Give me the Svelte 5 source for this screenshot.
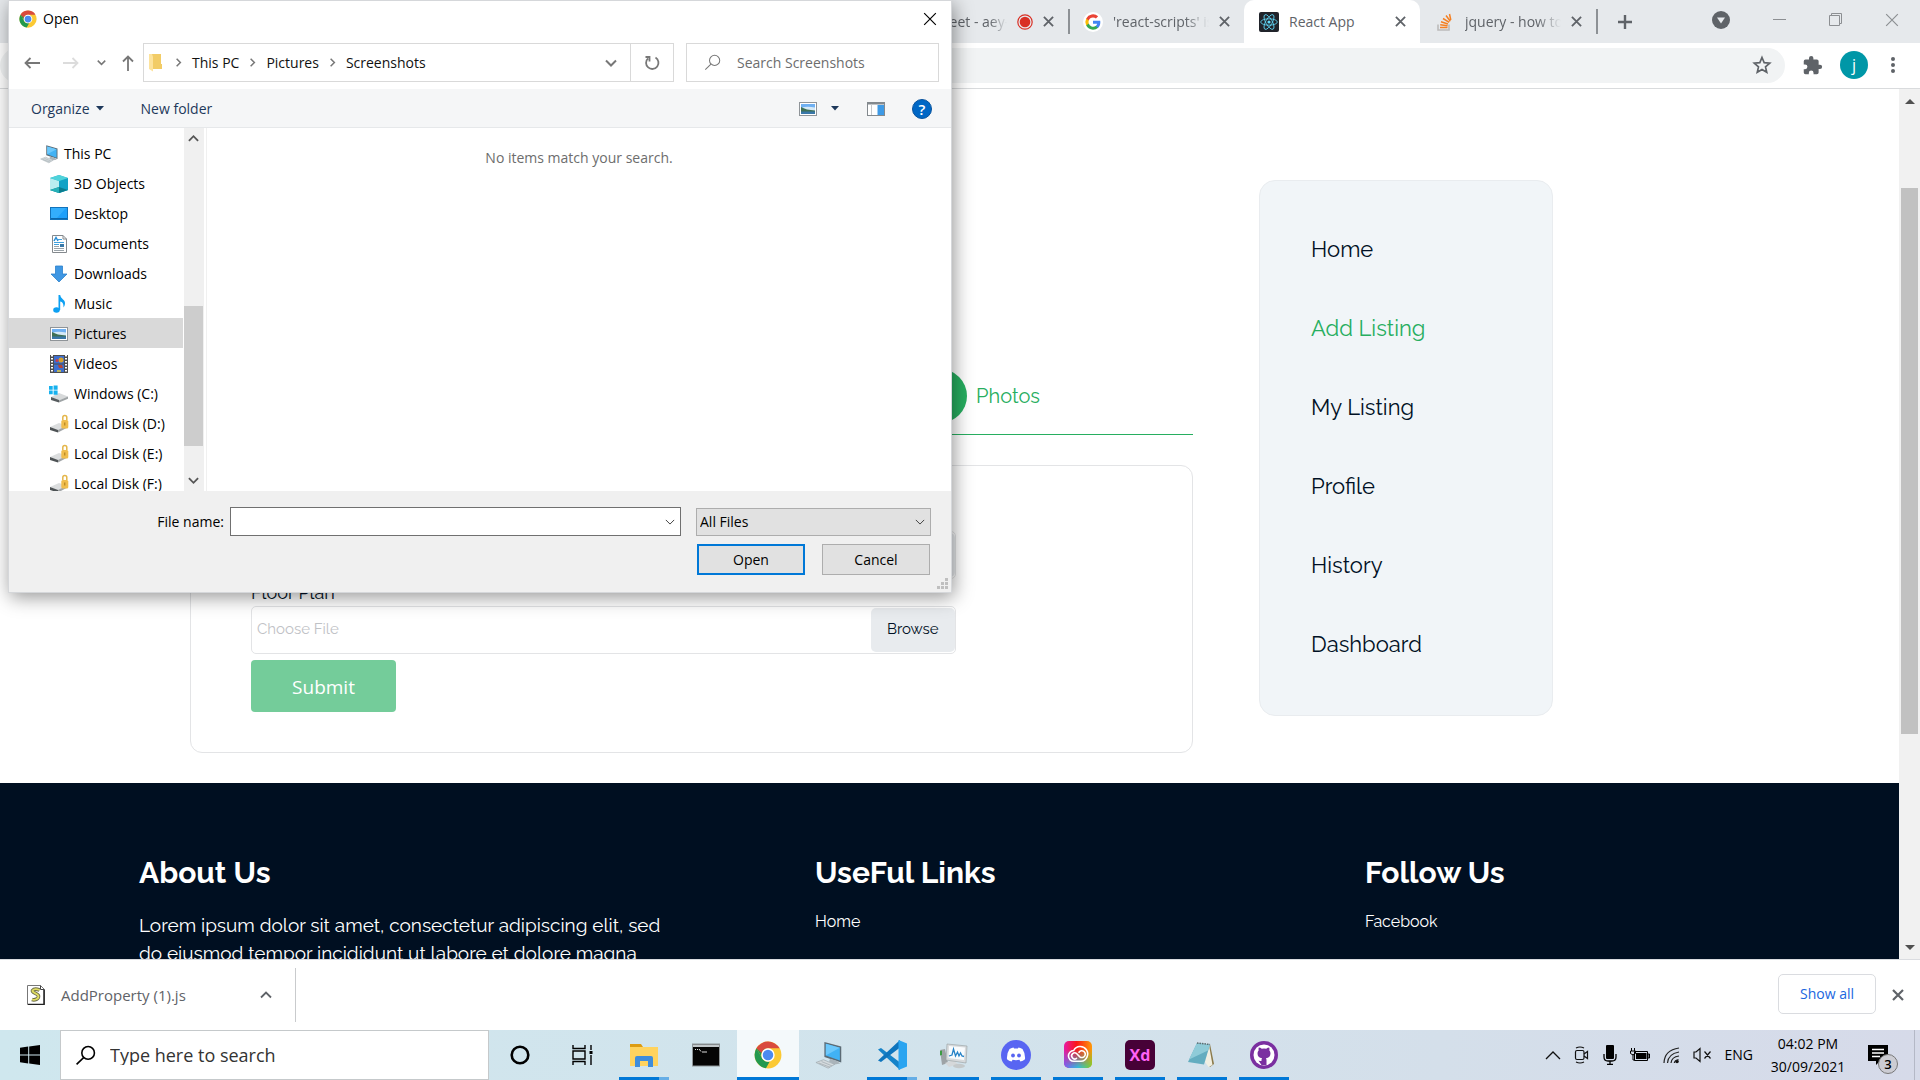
<script>
  const tree = [
    { icon: 'objects', label: '3D Objects' },
    { icon: 'desktop', label: 'Desktop' },
    { icon: 'documents', label: 'Documents' },
    { icon: 'downloads', label: 'Downloads' },
    { icon: 'music', label: 'Music' },
    { icon: 'picture', label: 'Pictures', selected: true },
    { icon: 'videos', label: 'Videos' },
    { icon: 'windrive', label: 'Windows (C:)' },
    { icon: 'drive', label: 'Local Disk (D:)' },
    { icon: 'drive', label: 'Local Disk (E:)' },
    { icon: 'drive', label: 'Local Disk (F:)' },
  ];
  const menu = ['Home', 'Add Listing', 'My Listing', 'Profile', 'History', 'Dashboard'];
  const crumbs = ['This PC', 'Pictures', 'Screenshots'];
  const apps = [
    { icon: 'explorer', label: 'File Explorer', state: 'multi' },
    { icon: 'cmd', label: 'Command Prompt', state: '' },
    { icon: 'chrome', label: 'Google Chrome', state: 'active' },
    { icon: 'pc', label: 'This PC', state: '' },
    { icon: 'vscode', label: 'Visual Studio Code', state: 'multi' },
    { icon: 'monitor', label: 'Resource Monitor', state: 'open' },
    { icon: 'discord', label: 'Discord', state: 'open' },
    { icon: 'cc', label: 'Creative Cloud', state: 'open' },
    { icon: 'xd', label: 'Adobe XD', state: 'open' },
    { icon: 'notepad', label: 'Notepad', state: 'open' },
    { icon: 'github', label: 'GitHub Desktop', state: 'open' },
  ];
  let fileName = $state('');
</script>

{#snippet cross(size, width = 2)}
  <svg width={size} height={size} viewBox="0 0 12 12" fill="none" stroke="currentColor" stroke-width={width}><path d="M1 1l10 10M11 1L1 11" /></svg>
{/snippet}

{#snippet chevron(dir, size, width = 2)}
  <svg class="chev {dir}" width={size} height={size} viewBox="0 0 12 12" fill="none" stroke="currentColor" stroke-width={width}><path d="M1 3.500l5 5 5-5" /></svg>
{/snippet}

{#snippet chrome(size)}
  <svg width={size} height={size} viewBox="0 0 48 48">
    <circle cx="24" cy="24" r="23" fill="#fbc934" />
    <path d="M4.100 12.500L14 29.700A11.500 11.500 0 0 0 27 35.100L20.500 46.700A23 23 0 0 1 4.100 12.500z" fill="#23994f" />
    <path d="M4.100 12.500L14 29.700A11.500 11.500 0 0 1 24 12.500h-8z" fill="#23994f" />
    <path d="M4.100 12.500A23 23 0 0 1 43.900 12.500H24a11.500 11.500 0 0 0-11 8z" fill="#d94b3d" />
    <circle cx="24" cy="24" r="11.500" fill="#fff" />
    <circle cx="24" cy="24" r="9" fill="#4b8af0" />
  </svg>
{/snippet}

{#snippet pc(size)}
  <svg width={size} height={size} viewBox="0 0 32 32">
    <path d="M10 2l18 5v17L10 18z" fill="#5c6b75" />
    <path d="M11.500 4l15 4.300v13.500L11.500 16.500z" fill="#41b2f4" />
    <path d="M11.500 4l15 4.300-15 8.200z" fill="#6cc8fb" />
    <path d="M16 20l7 2 4 3-6 1-6-3z" fill="#aab4ba" />
    <path d="M1 24l8-3 12 5-7 4z" fill="#d4dadd" stroke="#9aa5ab" stroke-width=".7" />
    <path d="M4 24.500l12 4.500M7 23l11 4.500" stroke="#9aa5ab" stroke-width=".7" />
  </svg>
{/snippet}

{#snippet picture(size)}
  <svg width={size} height={size} viewBox="0 0 20 20">
    <rect x="1.500" y="3.500" width="17" height="13" fill="#fff" stroke="#8f9498" />
    <rect x="3" y="5" width="14" height="10" fill="#6fb0f2" />
    <path d="M3 9q5-2 14-.5V12H3z" fill="#d5e9f6" />
    <path d="M3 8q5 3 14 3.500V13H3z" fill="#3f7055" />
    <path d="M3 12.500h14V15H3z" fill="#3977a8" />
  </svg>
{/snippet}

{#snippet lens(size, width)}
  <svg width={size} height={size} viewBox="0 0 20 20" fill="none" stroke="currentColor" stroke-width={width}><circle cx="12.500" cy="7.500" r="6" /><path d="M8.200 12L1.500 18.500" /></svg>
{/snippet}

{#snippet small(name)}
  {#if name === 'picture'}
    {@render picture(20)}
  {:else}
    <svg width="20" height="20" viewBox="0 0 20 20">
      {#if name === 'objects'}
        <path d="M10 1l9 3v12l-9 3-9-3V4z" fill="#27b5c9" />
        <path d="M1 4l9 3v12l-9-3z" fill="#b9edf0" /><path d="M10 7l9-3v12l-9 3z" fill="#12a3c6" />
        <path d="M10 1l9 3-9 3-9-3z" fill="#4fd2da" /><path d="M10 13l9 3-9 3-9-3z" fill="#0b7d8f" /><path d="M1 16l9-3v6z" fill="#26b1b8" />
      {:else if name === 'desktop'}
        <rect x="1.500" y="3.500" width="17" height="12" fill="#1ea0fa" stroke="#1273bb" /><path d="M2 4h15L7 15H2z" fill="#33aefc" /><path d="M2 14.500h16" stroke="#0c67ab" />
      {:else if name === 'documents'}
        <path d="M3.500 1.500H14L17.500 5v13.500h-14z" fill="#fff" stroke="#84898d" /><path d="M14 1.500V5h3.500" fill="none" stroke="#84898d" />
        <path d="M5 7l2-3.500L9 7" fill="none" stroke="#278cd5" stroke-width="1.500" /><path d="M9 5.500h4M5 8.500h10M5 10.500h5" stroke="#41a1dd" /><path d="M11 10h4v3h-4z" fill="#3979a8" /><path d="M5 12.500h5M5 14.500h10M5 16.500h10" stroke="#9aa3a9" />
      {:else if name === 'downloads'}
        <path d="M6.500 2h7v8H18l-8 8-8-8h4.500z" fill="#3f97e3" stroke="#2c80cc" stroke-width=".8" />
      {:else if name === 'music'}
        <ellipse cx="7.500" cy="16" rx="3.300" ry="2.800" fill="#0da0f2" /><path d="M9.500 16V1h1.700c.5 4 4.800 4.500 4.800 8 0 2-.6 3-1.500 4.500.2-4-1-5.500-3.300-6v8.500z" fill="#0da0f2" />
      {:else if name === 'videos'}
        <path d="M1 1h18v18H1z" fill="#4d4d4d" /><path d="M5 2h10v7.500H5zM5 10.500h10V18H5z" fill="#3d6fd0" />
        <path d="M3 1v18M17 1v18" stroke="#fff" stroke-width="2" stroke-dasharray="1.600 1.400" /><circle cx="12" cy="6" r="2.500" fill="#d5a02a" /><circle cx="8" cy="6.500" r="1.500" fill="#c83e4a" /><path d="M9 11h4l1 3h-4z" fill="#b34532" /><path d="M8 17h4" stroke="#e3cd3c" stroke-width="1.500" />
      {:else if name === 'windrive'}
        <path d="M2 13l8-4 9 3.500-9 4.500z" fill="#d7d9da" /><path d="M2 13l8 3v2.500L2 16z" fill="#565b5e" /><path d="M10 16.500l9-4v2.300L10 18.500z" fill="#9ea3a5" />
        <path d="M0 2h3.700v3.700H0zM4.600 1.500h4v4.200h-4zM0 6.600h3.700v3.700H0zM4.600 6.600h4v4.200h-4z" fill="#17b1ee" />
      {:else}
        <path d="M1 13l9-4 8 2.500-9 5z" fill="#dcdedf" /><path d="M1 13l8 3v2.500L1 16z" fill="#4d5254" /><path d="M9 16l9-4.500v2.300l-9 4.700z" fill="#a2a6a8" />
        <path d="M13.800 6V3.500a2 2 0 0 1 4 0V6" fill="none" stroke="#e4b64a" stroke-width="1.500" /><rect x="12.300" y="6" width="7" height="8.500" rx="1.500" fill="#f0bd4d" /><path d="M15.800 8.500v3" stroke="#a97818" />
      {/if}
    </svg>
  {/if}
{/snippet}

{#snippet app(name)}
  {#if name === 'chrome'}
    {@render chrome(28)}
  {:else if name === 'pc'}
    {@render pc(30)}
  {:else}
    <svg width="30" height="30" viewBox="0 0 30 30">
      {#if name === 'explorer'}
        <path d="M1 4h11l2 3h15v19H1z" fill="#dd9c12" /><path d="M1 7h28v19H1z" fill="#ffd35e" /><path d="M6 27V18q0-2 2-2h14q2 0 2 2v9h-5v-6h-8v6z" fill="#3f8ddb" />
      {:else if name === 'cmd'}
        <rect x="1.500" y="4" width="27" height="22" fill="#050505" stroke="#8e9598" /><path d="M2 4.500h26V7H2z" fill="#c2c8cb" /><path d="M4 9.500h1M6 9.500h1M8 9l2 2.500M11 12h5" stroke="#ddd" />
      {:else if name === 'vscode'}
        <path d="M1 9.500L4 8l19 14.500V30z" fill="#1583c9" /><path d="M1 20.500L4 22 23 7.500V0z" fill="#0d74bd" /><path d="M21.500 0L30 3.500v23L21.500 30z" fill="#2aa4f0" />
      {:else if name === 'monitor'}
        <path d="M1 10l5-1 3 14-6 2z" fill="#9da3a6" /><path d="M1 11l2-.5V15l-2 .4z" fill="#3c9c44" /><path d="M6 23l8-3 5 4-9 3z" fill="#d5d8da" />
        <path d="M8 4l20 2-1 17-20-3z" fill="#d7dadc" stroke="#969da0" stroke-width=".6" /><path d="M10 6l16 1.500-1 12.500-15.500-2z" fill="#f8fbfd" /><path d="M10 16l3-1 1.500-6 2 7 2-4 1.500 4 1.500-3 1.500 3 2 .5" fill="none" stroke="#2582c7" stroke-width="1.300" /><ellipse cx="20" cy="26" rx="6" ry="2.200" fill="#c4c9cb" />
      {:else if name === 'discord'}
        <circle cx="15" cy="15" r="15" fill="#5865f2" /><path d="M8.500 9q2.500-1.500 4-1.600l.6 1.200h3.800l.6-1.200q1.500.1 4 1.600 3 4.500 2.500 10.300-2 1.700-4.600 2.200l-1-1.700q-3.400.8-6.800 0l-1 1.700Q8 21 6 19.300 5.500 13.500 8.500 9z" fill="#fff" /><circle cx="12" cy="15.500" r="1.900" fill="#5865f2" /><circle cx="18" cy="15.500" r="1.900" fill="#5865f2" />
      {:else if name === 'cc'}
        <defs>
          <linearGradient id="ccTop" x1="0" x2="1"><stop offset="0" stop-color="#e81aa5" /><stop offset=".45" stop-color="#fb1718" /><stop offset="1" stop-color="#ff9a09" /></linearGradient>
          <linearGradient id="ccBottom" x1="0" x2="1"><stop offset="0" stop-color="#7a5df2" /><stop offset=".5" stop-color="#36b8d9" /><stop offset="1" stop-color="#7ad02c" /></linearGradient>
          <linearGradient id="ccFade" x1="0" x2="0" y1="0" y2="1"><stop offset=".3" stop-color="#fff" stop-opacity="0" /><stop offset=".9" stop-color="#fff" /></linearGradient>
          <mask id="ccMask"><rect width="30" height="30" fill="url(#ccFade)" /></mask>
        </defs>
        <rect x="1" y="1" width="28" height="27" rx="5" fill="url(#ccTop)" /><rect x="1" y="1" width="28" height="27" rx="5" fill="url(#ccBottom)" mask="url(#ccMask)" />
        <path d="M11 21.300a5.400 5.400 0 0 1-.3-10.800A7.400 7.400 0 1 1 18 21.300z" fill="none" stroke="#fff" stroke-width="1.600" />
        <path d="M13.500 18.300a3 3 0 1 1 .3-4.500l3 3a3.400 3.400 0 1 0-.8-4.500" fill="none" stroke="#fff" stroke-width="1.600" stroke-linecap="round" />
      {:else if name === 'xd'}
        <rect width="30" height="30" rx="5" fill="#470137" /><text class="xd" x="15" y="21" text-anchor="middle" fill="#ff61f6">Xd</text>
      {:else if name === 'notepad'}
        <path d="M23 4l4 20-4 3-4-5z" fill="#8b7a4a" /><path d="M22 5l3.500 20-4 2L18 22z" fill="#f1efe2" /><path d="M10 3l13 1.500-6 20L1 22z" fill="#64adc0" /><path d="M10 3l13 1.500-2 6-19 9z" fill="#8fcbd8" /><path d="M10 3l13 1.500" stroke="#5d6c70" stroke-width="1.500" stroke-dasharray="1.500 1" />
      {:else if name === 'github'}
        <circle cx="15" cy="15" r="14" fill="#7a2fa0" /><circle cx="15" cy="15" r="10.500" fill="#fff" />
        <path d="M12.500 25v-4q-3 .6-4-1.800M17.500 25v-5q0-1-.6-1.700 4.600-.6 4.600-5 0-1.700-1.200-3 .5-1.400-.1-2.800-1.500 0-3 1.200-2.200-.6-4.400 0-1.500-1.200-3-1.200-.6 1.400-.1 2.800-1.200 1.300-1.200 3 0 4.400 4.600 5-.6.700-.6 1.700v5z" fill="#7a2fa0" />
      {/if}
    </svg>
  {/if}
{/snippet}

<div class="screen">
  <header class="tabs">
    <div class="tab">
      <span class="favicon"></span>
      <span class="title fade">Meet - aey-</span>
      <svg width="16" height="16" viewBox="0 0 16 16"><circle cx="8" cy="8" r="7.200" fill="none" stroke="#d93025" stroke-width="1.200" /><circle cx="8" cy="8" r="5.300" fill="#d93025" /></svg>
      <button class="plain" aria-label="Close tab">{@render cross(11)}</button>
    </div>
    <div class="tab divided">
      <svg class="favicon round" width="20" height="20" viewBox="-3 -3 30 30"><path d="M23 12.300c0-.8-.1-1.600-.2-2.300H12v4.500h6.200a5.300 5.300 0 0 1-2.300 3.500v2.900h3.700c2.200-2 3.400-5 3.400-8.600z" fill="#4285f4" /><path d="M12 23.500c3.100 0 5.700-1 7.600-2.800L15.900 18a6.900 6.900 0 0 1-10.300-3.700H1.800v3A11.500 11.500 0 0 0 12 23.500z" fill="#34a853" /><path d="M5.600 14.200a6.900 6.900 0 0 1 0-4.400v-3H1.800a11.500 11.500 0 0 0 0 10.400z" fill="#fbbc05" /><path d="M12 5.100c1.700 0 3.200.6 4.400 1.700l3.300-3.300A11.500 11.500 0 0 0 1.800 6.800l3.800 3A6.900 6.900 0 0 1 12 5.100z" fill="#ea4335" /></svg>
      <span class="title fade">'react-scripts' is</span>
      <button class="plain" aria-label="Close tab">{@render cross(11)}</button>
    </div>
    <div class="tab current">
      <svg class="favicon" width="20" height="20" viewBox="0 0 20 20"><rect width="20" height="20" rx="2" fill="#20232a" /><g fill="none" stroke="#61dafb" stroke-width=".8"><ellipse cx="10" cy="10" rx="8.300" ry="3.200" /><ellipse cx="10" cy="10" rx="8.300" ry="3.200" transform="rotate(60 10 10)" /><ellipse cx="10" cy="10" rx="8.300" ry="3.200" transform="rotate(120 10 10)" /></g><circle cx="10" cy="10" r="1.600" fill="#61dafb" /></svg>
      <span class="title">React App</span>
      <button class="plain" aria-label="Close tab">{@render cross(11)}</button>
    </div>
    <div class="tab">
      <svg class="favicon" width="20" height="20" viewBox="0 0 20 20" fill="none"><path d="M3 12.500v5.500h11v-5.500" stroke="#bcbbbb" stroke-width="1.600" /><path d="M5 15.500h7.500M5.200 12.800l7.400.9M6 9.800l7 2.200M8 6.500l6.200 3.800M11 3.500l4.300 5.800M14.500 2l1.300 6" stroke="#f48024" stroke-width="1.500" /></svg>
      <span class="title fade">jquery - how to</span>
      <button class="plain" aria-label="Close tab">{@render cross(11)}</button>
    </div>
    <button class="plain new-tab" aria-label="New tab"><svg width="16" height="16" viewBox="0 0 16 16" stroke="#5f6368" stroke-width="2.400"><path d="M8 1v14M1 8h14" /></svg></button>
    <div class="window-controls">
      <button class="plain" aria-label="Search tabs"><svg width="18" height="18" viewBox="0 0 18 18"><circle cx="9" cy="9" r="9" fill="#5f6368" /><path d="M5 6.500h8L9 12.500z" fill="#e7eaed" /></svg></button>
      <button class="plain thin" aria-label="Minimize"><svg width="13" height="13" viewBox="0 0 13 13" stroke="currentColor"><path d="M0 6.500h13" /></svg></button>
      <button class="plain thin" aria-label="Restore"><svg width="13" height="13" viewBox="0 0 13 13" stroke="currentColor" fill="none"><path d="M.5 2.500h10v10H.5zM2.500 2.500v-2h10v10h-2" /></svg></button>
      <button class="plain thin" aria-label="Close window">{@render cross(14, 1)}</button>
    </div>
  </header>

  <div class="toolbar">
    <div class="omnibox">
      <button class="plain" aria-label="Bookmark"><svg width="20" height="20" viewBox="0 0 24 24" fill="none" stroke="#5f6368" stroke-width="2"><path d="M12 3l2.600 6.200 6.700.6-5.100 4.400 1.500 6.600L12 17.300l-5.700 3.500 1.500-6.600-5.100-4.400 6.700-.6z" /></svg></button>
    </div>
    <button class="plain" aria-label="Extensions"><svg width="21" height="21" viewBox="0 0 24 24" fill="#5f6368"><path d="M20.500 11H19V7a2 2 0 0 0-2-2h-4V3.500a2.500 2.500 0 0 0-5 0V5H4a2 2 0 0 0-2 2v3.800h1.500a2.700 2.700 0 0 1 0 5.400H2V20a2 2 0 0 0 2 2h3.800v-1.500a2.700 2.700 0 0 1 5.400 0V22H17a2 2 0 0 0 2-2v-4h1.500a2.500 2.500 0 0 0 0-5z" /></svg></button>
    <button class="plain avatar" aria-label="Profile j">j</button>
    <button class="plain" aria-label="Menu"><svg width="6" height="18" viewBox="0 0 6 18" fill="#5f6368"><circle cx="3" cy="3" r="2" /><circle cx="3" cy="9" r="2" /><circle cx="3" cy="15" r="2" /></svg></button>
  </div>

  <div class="viewport">
    <div class="page">
      <main>
        <div class="content">
          <div class="steps">
            <span class="dot"></span>
            <span>Photos</span>
          </div>
          <form class="card" onsubmit={(e) => e.preventDefault()}>
            <div class="file first"><input aria-label="Photo" /><button type="button" aria-label="Browse photos"></button></div>
            <label for="plan">Floor Plan</label>
            <div class="file"><input id="plan" placeholder="Choose File" /><button type="button">Browse</button></div>
            <button class="submit">Submit</button>
          </form>
        </div>
        <nav class="menu" aria-label="Account">
          {#each menu as item}
            <a href="#top" class:on={item === 'Add Listing'}>{item}</a>
          {/each}
        </nav>
      </main>
      <footer>
        <section>
          <h2>About Us</h2>
          <p>Lorem ipsum dolor sit amet, consectetur adipiscing elit, sed<br />do eiusmod tempor incididunt ut labore et dolore magna</p>
        </section>
        <section>
          <h2>UseFul Links</h2>
          <a href="#top">Home</a>
        </section>
        <section>
          <h2>Follow Us</h2>
          <a href="#top">Facebook</a>
        </section>
      </footer>
    </div>
    <div class="page-scroll" aria-hidden="true">
      <svg width="10" height="5" viewBox="0 0 10 5" fill="#505050"><path d="M0 5l5-5 5 5z" /></svg>
      <div class="track"><div class="thumb"></div></div>
      <svg width="10" height="5" viewBox="0 0 10 5" fill="#505050"><path d="M0 0l5 5 5-5z" /></svg>
    </div>
  </div>

  <div class="shelf">
    <div class="download">
      <svg width="18" height="20" viewBox="0 0 18 20"><path d="M.5.5h13l4 4v15H.5z" fill="#fff" stroke="#777" /><path d="M17 5v14.500H1" fill="none" stroke="#222" stroke-width="1.500" /><path d="M13.500.5v4h4" fill="none" stroke="#444" /><path d="M12.500 5q-5-2-7 .5c-.8 2.500 5.500 2.500 6 5.500.3 3-4 4.500-6.500 3.500" fill="none" stroke="#6e6e4a" stroke-width="3.600" /><path d="M12.500 5q-5-2-7 .5c-.8 2.500 5.500 2.500 6 5.500.3 3-4 4.500-6.500 3.500" fill="none" stroke="#e0dd62" stroke-width="1.800" /></svg>
      <span>AddProperty (1).js</span>
      <button class="plain" aria-label="Download options">{@render chevron('up', 12, 1.8)}</button>
    </div>
    <button class="show-all">Show all</button>
    <button class="plain" aria-label="Close downloads">{@render cross(12, 2.2)}</button>
  </div>

  <div class="taskbar">
    <button class="plain slot start" aria-label="Start"><svg width="20" height="20" viewBox="0 0 20 20"><path d="M0 2.800L8.200 1.600v7.900H0zM9.200 1.500L20 0v9.500H9.200zM0 10.500h8.200v7.900L0 17.200zM9.200 10.500H20V20L9.200 18.500z" /></svg></button>
    <label class="search">
      {@render lens(21, 1.5)}
      <input aria-label="Search" placeholder="Type here to search" />
    </label>
    <button class="plain slot" aria-label="Cortana"><svg width="20" height="20" viewBox="0 0 20 20"><circle cx="10" cy="10" r="8.300" fill="none" stroke="#000" stroke-width="2.600" /></svg></button>
    <button class="plain slot" aria-label="Task view"><svg width="21" height="20" viewBox="0 0 21 20" fill="none" stroke="#000" stroke-width="1.400"><path d="M1 0v3.500h12V0M1 20v-3.500h12V20M1 6h12v8H1zM19 0v5M19 10v10" /><path d="M17.500 6h3v3h-3z" fill="#000" stroke="none" /></svg></button>
    {#each apps as item}
      <button class="plain slot {item.state}" aria-label={item.label}>{@render app(item.icon)}</button>
    {/each}
    <div class="tray">
      <svg width="16" height="10" viewBox="0 0 16 10" fill="none" stroke="#111" stroke-width="1.300"><path d="M1 9l7-7 7 7" /></svg>
      <svg width="16" height="18" viewBox="0 0 16 18" fill="none" stroke="#111" stroke-width="1.200"><rect x="1.500" y="4.500" width="8.500" height="9" rx="1.500" /><path d="M10 8l3.500-2.500v7L10 10M2 2q4-2 8 0M2 16q4 2 8 0" /></svg>
      <svg width="14" height="20" viewBox="0 0 14 20"><rect x="3" y="0" width="8" height="14" rx="1" /><path d="M1 9v3q0 4 4 4h4q4 0 4-4V9M7 16v3M4 19.300h6" fill="none" stroke="#000" stroke-width="1.300" /></svg>
      <svg width="20" height="14" viewBox="0 0 20 14"><path d="M4.500 3.500h13v9h-13z" fill="none" stroke="#000" /><path d="M6 5h10.500v6H6z" /><path d="M18 6h1.500v4H18zM1.500 0v3M4.500 0v3M.5 3h5v2.500L3 7 .5 5.500zM3 6v6h2" fill="none" stroke="#000" /></svg>
      <svg width="17" height="17" viewBox="0 0 17 17" fill="none" stroke="#222" stroke-width="1.200"><path d="M1 16Q1.500 3 16 1M4.500 16Q5 7 16 5M8 16q.5-6 8-7" /><circle cx="14" cy="14.500" r="1.800" fill="#111" stroke="none" /><path d="M11.300 16q.2-2.500 4.200-3.500" /></svg>
      <svg width="19" height="16" viewBox="0 0 19 16" fill="none" stroke="#111" stroke-width="1.200"><path d="M1 5v6h2l4 3.500v-13L3 5zM11.500 4.500l6 7M17.500 4.500l-6 7" /></svg>
      <span>ENG</span>
      <div class="clock"><span>04:02 PM</span><span>30/09/2021</span></div>
      <div class="notice">
        <svg width="21" height="20" viewBox="0 0 21 20"><path d="M0 0h20v16h-8l-4 4v-4H0z" /><path d="M4 4.500h12M4 8h12M4 11.500h8" stroke="#fff" stroke-width="1.300" /></svg>
        <span class="badge">3</span>
      </div>
    </div>
  </div>

  <div class="dialog" role="dialog" aria-label="Open">
    <div class="dialog-title">
      {@render chrome(18)}
      <span>Open</span>
      <button class="plain" aria-label="Close">{@render cross(14, 1)}</button>
    </div>
    <div class="dialog-nav">
      <div class="arrows">
        <button class="plain" aria-label="Back"><svg width="16" height="12" viewBox="0 0 16 12" fill="none" stroke="#777" stroke-width="1.800"><path d="M16 6H1.500M6.500 1l-5 5 5 5" /></svg></button>
        <button class="plain" aria-label="Forward"><svg width="16" height="12" viewBox="0 0 16 12" fill="none" stroke="#dcdcdc" stroke-width="1.800"><path d="M0 6h14.500M9.500 1l5 5-5 5" /></svg></button>
        <button class="plain grey" aria-label="Recent">{@render chevron('down', 9, 2)}</button>
        <button class="plain" aria-label="Up"><svg width="12" height="16" viewBox="0 0 12 16" fill="none" stroke="#777" stroke-width="1.800"><path d="M6 16V1.500M1 6.500l5-5 5 5" /></svg></button>
      </div>
      <div class="address">
        <svg width="13" height="18" viewBox="0 0 13 18"><path d="M3 0h9v10h1v5H3z" fill="#f2cc66" /><path d="M0 0h3l1 3v14.500L0 15z" fill="#fde39c" /></svg>
        {#each crumbs as crumb}
          {@render chevron('right', 9, 2)}
          <button class="plain crumb">{crumb}</button>
        {/each}
        <button class="plain history" aria-label="Previous locations">{@render chevron('down', 12, 2)}</button>
        <button class="plain refresh" aria-label="Refresh"><svg width="16" height="16" viewBox="0 0 16 16" fill="none" stroke="#777" stroke-width="1.800"><path d="M11.500 2.500A6.200 6.200 0 1 1 4 3.300M1.500 2h4v4.500" /></svg></button>
      </div>
      <label class="find">
        {@render lens(17, 1.2)}
        <input aria-label="Search Screenshots" placeholder="Search Screenshots" />
      </label>
    </div>
    <div class="dialog-tools">
      <button class="plain tool">Organize <svg width="8" height="5" viewBox="0 0 8 5" fill="currentColor"><path d="M0 0h8L4 4.500z" /></svg></button>
      <button class="plain tool">New folder</button>
      <button class="plain view" aria-label="Change view">{@render picture(20)}<svg width="8" height="5" viewBox="0 0 8 5" fill="#1e395b"><path d="M0 0h8L4 4.500z" /></svg></button>
      <button class="plain pane" aria-label="Preview pane"><svg width="18" height="14" viewBox="0 0 18 14"><rect x=".5" y=".5" width="17" height="13" fill="#fff" stroke="#83898e" /><path d="M0 0h18v2.500H0z" fill="#83898e" /><path d="M4.500 2v11" stroke="#c5c9cc" /><path d="M10.500 3H17v10h-6.500z" fill="#3e9ae6" /></svg></button>
      <button class="plain help" aria-label="Help">?</button>
    </div>
    <div class="dialog-body">
      <ul class="tree">
        <li class="root">{@render pc(20)}<span>This PC</span></li>
        {#each tree as node}
          <li class:selected={node.selected}>{@render small(node.icon)}<span>{node.label}</span></li>
        {/each}
      </ul>
      <div class="tree-scroll" aria-hidden="true">
        {@render chevron('up', 11, 2)}
        <div class="track"><div class="thumb"></div></div>
        {@render chevron('down', 11, 2)}
      </div>
      <div class="files">No items match your search.</div>
    </div>
    <div class="dialog-foot">
      <div class="foot-row">
        <label for="filename">File name:</label>
        <div class="combo"><input id="filename" bind:value={fileName} />{@render chevron('down', 10, 1.2)}</div>
        <div class="filter"><select aria-label="File type"><option>All Files</option></select>{@render chevron('down', 10, 1.2)}</div>
      </div>
      <div class="foot-row buttons">
        <button class="push primary">Open</button>
        <button class="push">Cancel</button>
      </div>
      <svg class="grip" width="11" height="11" viewBox="0 0 11 11" fill="#bfbfbf"><path d="M8 0h3v3H8zM4 4h3v3H4zM8 4h3v3H8zM0 8h3v3H0zM4 8h3v3H4zM8 8h3v3H8z" /></svg>
    </div>
  </div>
</div>

<style>
  :global(body) { margin: 0; }
  * { box-sizing: border-box; }
  svg { display: block; flex: none; }
  button, input, select { font: inherit; color: inherit; }
  .plain { display: flex; align-items: center; justify-content: center; padding: 0; border: 0; background: none; }
  .screen {
    position: relative;
    display: flex;
    flex-direction: column;
    height: 100vh;
    overflow: hidden;
    background: #fff;
    color: #000;
    font: 14px/20px "Segoe UI", "Open Sans", "Noto Sans", sans-serif;
  }
  .chev.up { transform: rotate(180deg); }
  .chev.right { transform: rotate(-90deg); }

  /* browser frame */
  .tabs { display: flex; flex: none; height: 43px; padding-left: 892px; background: #e6e9ec; color: #5f6368; }
  .tab { display: flex; align-items: center; gap: 10px; width: 176px; height: 43px; padding: 0 14px 0 15px; flex: none; }
  .tab.divided { border-left: 2px solid #8d9195; border-image: linear-gradient(transparent 22%, #8d9195 22%, #8d9195 78%, transparent 78%) 1; padding-left: 13px; }
  .favicon { width: 20px; height: 20px; flex: none; }
  .round { background: #fff; border-radius: 50%; }
  .title { flex: 1; min-width: 0; overflow: hidden; white-space: nowrap; }
  .fade { mask-image: linear-gradient(90deg, #000 75%, transparent); }
  .current { background: #fff; border-radius: 10px 10px 0 0; }
  .new-tab { width: 56px; border-left: 2px solid; border-image: linear-gradient(transparent 22%, #8d9195 22%, #8d9195 78%, transparent 78%) 1; }
  .window-controls { display: flex; align-items: center; gap: 43px; margin-left: auto; padding: 0 21px 4px 0; }
  .thin { color: #8c8f92; }
  .toolbar { display: flex; flex: none; align-items: center; gap: 17px; height: 46px; padding: 0 24px 1px 0; border-bottom: 1px solid #d9dbdd; }
  .omnibox { display: flex; flex: 1; justify-content: flex-end; align-items: center; height: 35px; padding-right: 13px; border-radius: 18px; background: #f1f3f4; }
  .avatar { width: 28px; height: 28px; margin-right: 5px; border-radius: 50%; background: #0097a7; color: #fff; font-size: 16px; }

  /* web page */
  .viewport { display: flex; flex: 1; min-height: 0; overflow: hidden; }
  .page { flex: 1; overflow: hidden; color: #001024; font-family: Raleway, Lato, "Open Sans", sans-serif; }
  main { display: flex; align-items: flex-start; gap: 66px; padding: 91px 346px 0 190px; }
  .content { flex: 1; padding-top: 186px; }
  .steps { display: flex; align-items: center; justify-content: flex-end; gap: 9px; height: 69px; padding: 0 153px 8px 0; border-bottom: 1px solid #27ae60; color: #27ae60; font-size: 20px; font-weight: 400; }
  .dot { width: 54px; height: 54px; border-radius: 50%; background: #27ae60; }
  .card { display: flex; flex-direction: column; align-items: flex-start; margin: 30px 0; padding: 65px 60px 40px; border: 1px solid #e3e4e6; border-radius: 12px; }
  .card label { height: 27px; font-size: 18px; font-weight: 400; line-height: 28px; }
  .file { display: flex; width: 80%; height: 48px; padding: 1px 0; border: 1px solid #e3e4e6; border-radius: 5px; }
  .file input { flex: 1; min-width: 0; padding: 0 0 2px 5px; border: 0; background: none; font-size: 15px; }
  .file input::placeholder { color: #bfc2c6; }
  .file button { width: 84px; padding: 0 0 2px; border: 0; border-radius: 5px; background: #e8ebee; font-size: 15px; }
  .submit { width: 145px; height: 52px; margin-top: 6px; padding: 2px 0 0; border: 0; border-radius: 4px; background: #74cc9a; color: #fff; font: 500 19px/28px "Segoe UI", "Open Sans", sans-serif; }
  .menu { display: flex; flex-direction: column; width: 294px; height: 536px; padding: 29px 51px; border: 1px solid #e9ecef; border-radius: 16px; background: #f1f5f8; }
  .menu a { color: #001024; font-size: 22px; font-weight: 400; line-height: 79px; text-decoration: none; }
  .menu .on { color: #27ae60; }
  footer { display: grid; grid-template-columns: 676fr 550fr 534fr; height: 260px; padding: 70px 0 0 139px; background: #000f21; color: #fff; }
  footer h2 { margin: 0 0 18px; font-size: 30px; line-height: 40px; }
  footer p { margin: 0; font-size: 19px; line-height: 28px; }
  footer a { color: #fff; font-size: 16px; line-height: 22px; text-decoration: none; }
  .page-scroll { display: flex; flex-direction: column; align-items: center; width: 21px; padding: 10px 0 9px; background: #f1f1f1; }
  .track { flex: 1; }
  .page-scroll .track { padding-top: 84px; }
  .page-scroll .thumb { width: 17px; height: 65%; min-height: 546px; background: #c1c1c1; }

  /* downloads */
  .shelf { display: flex; flex: none; align-items: center; gap: 16px; height: 71px; padding: 0 16px 0 27px; border-top: 1px solid #dadce0; background: #fff; color: #5f6368; }
  .download { display: flex; align-items: center; gap: 16px; width: 269px; height: 54px; margin-right: auto; padding-right: 23px; border-right: 1px solid #c9cbcd; }
  .download button { margin-left: auto; }
  .download span { font-size: 15px; }
  .show-all { width: 98px; height: 40px; margin-bottom: 2px; border: 1px solid #dadce0; border-radius: 5px; background: #fff; color: #1a66e0; }

  /* taskbar */
  .taskbar { display: flex; flex: none; height: 50px; background: linear-gradient(90deg, #cfe7ee, #d2e3ec 50%, #d4dfea 75%, #d6dae9); }
  .slot { position: relative; width: 62px; flex: none; }
  .start { width: 60px; }
  .search { display: flex; align-items: center; gap: 14px; width: 429px; padding: 0 14px; border: 1px solid #c5c9cb; background: #fff; }
  .search input { flex: 1; border: 0; padding: 0; outline: 0; font-size: 18px; }
  .search input::placeholder { color: #333; }
  .slot.open::after, .slot.multi::after, .slot.active::after { content: ""; position: absolute; bottom: 0; left: 6px; right: 6px; height: 3px; background: #0078d7; }
  .slot.multi::after { background: linear-gradient(90deg, #0078d7 80%, #66aee6 80%); }
  .slot.active { background: #f4f9fb; }
  .slot.active::after { left: 0; right: 0; }
  .tray { display: flex; align-items: center; gap: 13px; margin-left: auto; padding-right: 25px; border-right: 1px solid #b4b8c6; margin-right: 5px; }
  .clock { display: flex; flex-direction: column; width: 84px; align-items: center; line-height: 23px; }
  .notice { position: relative; margin-left: 5px; }
  .badge { position: absolute; left: 10px; top: 9px; width: 20px; height: 20px; border: 1px solid #777; border-radius: 50%; background: #ccccd3; font-size: 13px; font-weight: 600; line-height: 18px; text-align: center; }
  .xd { font: 700 16px "Open Sans", sans-serif; }

  /* file dialog */
  .dialog { position: absolute; left: 8px; top: 0; display: flex; flex-direction: column; width: 944px; height: 593px; border: 1px solid #d5d7da; background: #fff; box-shadow: 2px 4px 18px rgba(0, 0, 0, .42); }
  .dialog-title { display: flex; align-items: center; gap: 6px; height: 42px; padding: 0 14px 6px 10px; }
  .dialog-title button { margin-left: auto; }
  .dialog-nav { display: flex; height: 46px; padding: 0 12px 7px 15px; }
  .arrows { display: flex; align-items: center; gap: 23px; width: 119px; }
  .arrows button:nth-child(2) { margin-right: -5px; }
  .arrows button:nth-child(4) { margin-left: -7px; }
  .grey { color: #777; }
  .address { display: flex; flex: 1; align-items: center; gap: 9px; padding-left: 5px; border: 1px solid #d9d9d9; color: #777; }
  .address > svg:first-child { margin-right: 3px; }
  .crumb { color: #111; }
  .history { margin-left: auto; padding-right: 4px; }
  .refresh { width: 43px; align-self: stretch; border-left: 1px solid #d9d9d9; }
  .find { display: flex; align-items: center; gap: 16px; width: 253px; margin-left: 12px; padding-left: 17px; border: 1px solid #d9d9d9; color: #777; }
  .find input { width: 190px; padding: 0; border: 0; }
  .find input::placeholder { color: #6d6d6d; }
  .dialog-tools { display: flex; align-items: center; height: 39px; padding: 1px 19px 0 22px; border-bottom: 1px solid #e6e8ea; background: #f5f6f7; color: #1e395b; }
  .tool { gap: 6px; margin-right: 37px; }
  .view { gap: 13px; margin-left: auto; }
  .pane { margin: 0 27px 0 28px; }
  .help { width: 20px; height: 20px; border: 1px solid #08539d; border-radius: 50%; background: #0067c5; color: #fff; font-size: 15px; font-weight: 600; }
  .dialog-body { display: flex; flex: 1; min-height: 0; overflow: hidden; }
  .tree { width: 175px; margin: 0; padding: 10px 1px 0 0; overflow: hidden; list-style: none; }
  .tree li { display: flex; align-items: center; gap: 5px; height: 30px; padding: 2px 0 0 40px; white-space: nowrap; }
  .tree .root { gap: 4px; padding-left: 31px; }
  .tree .selected { background: #d9d9d9; }
  .tree-scroll { display: flex; flex-direction: column; align-items: center; width: 20px; padding: 5px 1px 5px 0; background: #f0f0f0; color: #555; }
  .tree-scroll .track { padding-top: 162px; }
  .tree-scroll .thumb { width: 19px; height: 140px; background: #cdcdcd; }
  .files { flex: 1; margin-left: 2px; padding-top: 20px; border-left: 1px solid #f0f0f0; color: #6d6d6d; text-align: center; }
  .dialog-foot { position: relative; height: 101px; padding: 16px 20px 0; background: #f0f0f0; }
  .foot-row { display: flex; align-items: center; justify-content: flex-end; height: 29px; }
  .foot-row label { margin-right: 6px; }
  .combo, .filter { display: flex; align-items: center; width: 451px; height: 29px; padding-right: 5px; border: 1px solid #707070; background: #fff; color: #444; }
  .combo input { flex: 1; border: 0; outline: 0; }
  .filter { width: 235px; height: 28px; margin-left: 15px; border-color: #adadad; background: #e1e1e1; }
  .filter select { flex: 1; padding: 0 0 0 3px; border: 0; appearance: none; background: none; color: #000; }
  .buttons { gap: 17px; height: 31px; margin-top: 8px; padding-right: 1px; }
  .push { width: 108px; height: 31px; padding: 0; border: 1px solid #adadad; background: #e1e1e1; }
  .primary { border: 2px solid #0078d7; }
  .grip { position: absolute; right: 3px; bottom: 3px; }
</style>
